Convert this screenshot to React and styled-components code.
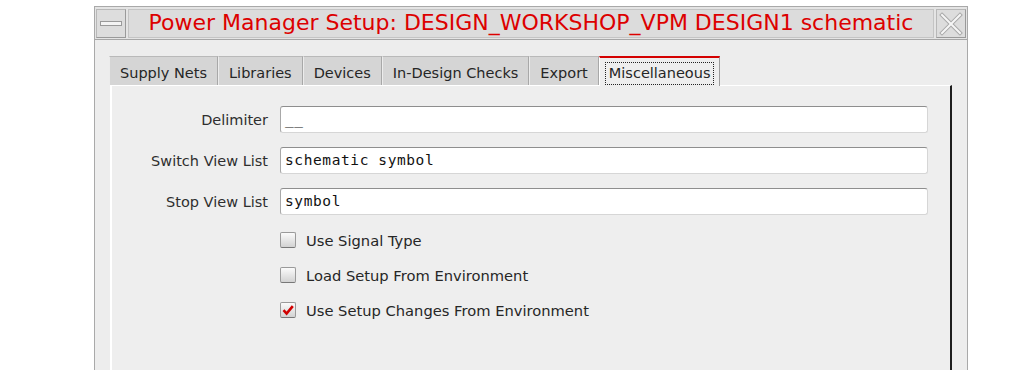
import React from "react";
import styled, { createGlobalStyle } from "styled-components";

const Global = createGlobalStyle`
  html, body { margin: 0; padding: 0; background: #ffffff; overflow: hidden; }
  body { font-family: "DejaVu Sans", "Liberation Sans", sans-serif; }
`;

const Page = styled.div`
  width: 1013px;
  height: 370px;
  padding: 6px 0 0 94px;
  box-sizing: border-box;
`;

const Window = styled.div`
  width: 874px;
  height: 364px;
  box-sizing: border-box;
  border: 1px solid #a9a9a9;
  border-bottom: none;
  background: #ededed;
  display: flex;
  flex-direction: column;
`;

const TitleBar = styled.div`
  display: flex;
  align-items: stretch;
  gap: 2px;
  height: 33px;
  padding: 2px 1px 1px 1px;
  box-sizing: border-box;
  background: #e4e4e4;
  border-bottom: 1px solid #a6a6a6;
`;

const WinButton = styled.div`
  width: 30px;
  flex: none;
  box-sizing: border-box;
  border: 1px solid #b8b8b8;
  border-right-color: #9a9a9a;
  border-bottom-color: #9a9a9a;
  background: #dddddd;
  display: flex;
  align-items: center;
  justify-content: center;
`;

const TitleArea = styled.div`
  flex: 1;
  box-sizing: border-box;
  border: 1px solid #c4c4c4;
  background: #dcdcdc;
  display: flex;
  align-items: center;
  justify-content: center;
  color: #dd0000;
  font-size: 22px;
  padding-bottom: 2px;
  white-space: nowrap;
`;

const Body = styled.div`
  flex: 1;
  padding: 16px 15px 0 15px;
  display: flex;
  flex-direction: column;
`;

const TabRow = styled.div`
  display: flex;
  align-items: flex-end;
  height: 29px;
  margin-left: -1px;
`;

const Tab = styled.div`
  box-sizing: border-box;
  padding: 3px 10px 0 10px;
  display: flex;
  align-items: center;
  font-size: 14.5px;
  color: #262626;
  background: ${(p) => (p.$active ? "#eeeeee" : "#d5d5d5")};
  border-top: ${(p) => (p.$active ? "2px solid #d40000" : "1px solid #b9b9b9")};
  border-left: 1px solid ${(p) => (p.$active ? "#ffffff" : "#ececec")};
  border-right: 1px solid ${(p) => (p.$active ? "#9c9c9c" : "#a8a8a8")};
  margin-bottom: ${(p) => (p.$active ? "-1px" : "0")};
  height: ${(p) => (p.$active ? "30px" : "29px")};
  position: relative;
  z-index: ${(p) => (p.$active ? 1 : 0)};
`;

const Focus = styled.span`
  border: 1px dotted #222;
  padding: 2px 3px 3px 3px;
  margin: 0 -5px;
`;

const Panel = styled.div`
  flex: 1;
  box-sizing: border-box;
  background: #eeeeee;
  border-top: 1px solid #ffffff;
  border-left: 2px solid #ffffff;
  border-right: 2px solid #1e1e1e;
  padding: 20px 22px 0 0;
  display: flex;
  flex-direction: column;
`;

const FieldGrid = styled.div`
  display: grid;
  grid-template-columns: 156px 1fr;
  column-gap: 12px;
  row-gap: 14px;
  align-items: center;
`;

const Label = styled.div`
  text-align: right;
  font-size: 14.5px;
  color: #2e2e2e;
  white-space: nowrap;
`;

const Input = styled.div`
  height: 27px;
  box-sizing: border-box;
  background: #ffffff;
  border: 1px solid #d6d6d6;
  border-top: 1px solid #8e8e8e;
  border-left: 1px solid #a8a8a8;
  border-radius: 3px;
  display: flex;
  align-items: center;
  padding: 0 0 1px 4px;
  font-family: "DejaVu Sans Mono", "Liberation Mono", monospace;
  font-size: 14.5px;
  letter-spacing: 0.6px;
  color: #111;
  white-space: pre;
`;

const Checks = styled.div`
  display: flex;
  flex-direction: column;
  gap: 15px;
  padding: 15px 0 0 168px;
`;

const CheckRow = styled.div`
  display: flex;
  align-items: center;
  gap: 10px;
  height: 20px;
  font-size: 14.7px;
  color: #262626;
`;

const Box = styled.div`
  width: 16px;
  height: 16px;
  box-sizing: border-box;
  border: 1px solid #9a9a9a;
  border-bottom-color: #777;
  border-radius: 2px;
  background: linear-gradient(#fbfbfb, #d2d2d2);
  display: flex;
  align-items: center;
  justify-content: center;
`;

function CheckBox({ checked }) {
  return (
    <Box>
      {checked && (
        <svg width="12" height="12" viewBox="0 0 12 12">
          <path d="M1.5 6.2 L4.6 9.6 L10.8 2.2" fill="none" stroke="#d00000" strokeWidth="2.6" strokeLinejoin="miter" />
        </svg>
      )}
    </Box>
  );
}

const tabs = ["Supply Nets", "Libraries", "Devices", "In-Design Checks", "Export"];

export default function App() {
  return (
    <>
      <Global />
      <Page>
        <Window>
          <TitleBar>
            <WinButton>
              <svg width="22" height="6" viewBox="0 0 22 6">
                <rect x="0.5" y="0.5" width="21" height="4" fill="#f4f4f4" stroke="#9a9a9a" />
              </svg>
            </WinButton>
            <TitleArea>Power Manager Setup: DESIGN_WORKSHOP_VPM DESIGN1 schematic</TitleArea>
            <WinButton>
              <svg width="24" height="24" viewBox="0 0 24 24">
                <path d="M3 3 L21 21 M21 3 L3 21" stroke="#a8a8a8" strokeWidth="4" strokeLinecap="square" />
                <path d="M3 3 L21 21 M21 3 L3 21" stroke="#f6f6f6" strokeWidth="2" strokeLinecap="square" />
              </svg>
            </WinButton>
          </TitleBar>
          <Body>
            <TabRow>
              {tabs.map((t) => (
                <Tab key={t}>{t}</Tab>
              ))}
              <Tab $active>
                <Focus>Miscellaneous</Focus>
              </Tab>
            </TabRow>
            <Panel>
              <FieldGrid>
                <Label>Delimiter</Label>
                <Input>__</Input>
                <Label>Switch View List</Label>
                <Input>schematic symbol</Input>
                <Label>Stop View List</Label>
                <Input>symbol</Input>
              </FieldGrid>
              <Checks>
                <CheckRow>
                  <CheckBox />
                  Use Signal Type
                </CheckRow>
                <CheckRow>
                  <CheckBox />
                  Load Setup From Environment
                </CheckRow>
                <CheckRow>
                  <CheckBox checked />
                  Use Setup Changes From Environment
                </CheckRow>
              </Checks>
            </Panel>
          </Body>
        </Window>
      </Page>
    </>
  );
}
